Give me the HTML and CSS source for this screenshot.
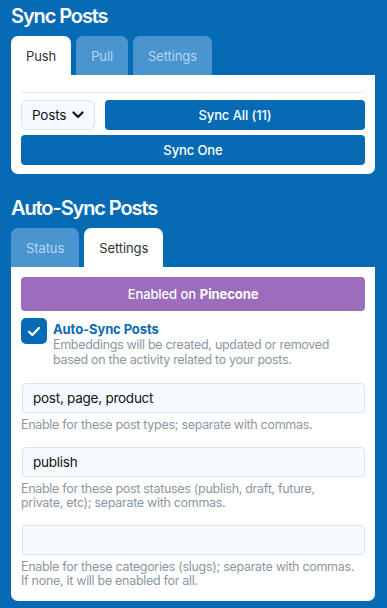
FILE: index.html
```
<!DOCTYPE html>
<html>
<head>
<meta charset="utf-8">
<link rel="stylesheet" href="styles.css">
</head>
<body>
<div class="page">
  <section class="block">
    <h2 class="title">Sync Posts</h2>
    <div class="tabs">
      <div class="tab active">Push</div>
      <div class="tab">Pull</div>
      <div class="tab">Settings</div>
    </div>
    <div class="panel panel-sync">
      <div class="rule"></div>
      <div class="row">
        <div class="select">Posts
          <svg class="chev" width="12" height="8" viewBox="0 0 12 8"><path d="M1.5 1.5 L6 6 L10.5 1.5" fill="none" stroke="#111" stroke-width="2.2" stroke-linecap="round" stroke-linejoin="round"/></svg>
        </div>
        <button class="btn grow">Sync All (11)</button>
      </div>
      <button class="btn full">Sync One</button>
    </div>
  </section>

  <section class="block">
    <h2 class="title">Auto-Sync Posts</h2>
    <div class="tabs">
      <div class="tab">Status</div>
      <div class="tab active">Settings</div>
    </div>
    <div class="panel panel-auto">
      <div class="banner">Enabled on <b>Pinecone</b></div>
      <div class="check-row">
        <div class="checkbox">
          <svg width="14" height="11" viewBox="0 0 14 11"><path d="M2 5.8 L5.3 9 L12 2" fill="none" stroke="#fff" stroke-width="2.2" stroke-linecap="round" stroke-linejoin="round"/></svg>
        </div>
        <div class="check-text">
          <div class="check-label">Auto-Sync Posts</div>
          <div class="check-desc">Embeddings will be created, updated or removed based on the activity related to your posts.</div>
        </div>
      </div>
      <div class="field first">
        <div class="input">post, page, product</div>
        <div class="help">Enable for these post types; separate with commas.</div>
      </div>
      <div class="field">
        <div class="input">publish</div>
        <div class="help">Enable for these post statuses (publish, draft, future, private, etc); separate with commas.</div>
      </div>
      <div class="field">
        <div class="input"></div>
        <div class="help">Enable for these categories (slugs); separate with commas. If none, it will be enabled for all.</div>
      </div>
    </div>
  </section>
</div>
</body>
</html>
```
FILE: styles.css
```
* { box-sizing: border-box; }
html, body { margin: 0; padding: 0; }
body {
  background: #066ab5;
  font-family: Inter, "Noto Sans", "Liberation Sans", sans-serif;
  color: #222;
}
.page { padding: 0 12px 0 11px; }
.title {
  margin: 0;
  color: #fff;
  font-size: 20px;
  font-weight: 600;
  letter-spacing: -1.1px;
  line-height: 24px;
}
.block:first-child .title { padding-top: 4px; margin-bottom: 8px; }
.block + .block .title { padding-top: 22px; margin-bottom: 8px; }
.tabs { display: flex; gap: 5px; }
.tab {
  height: 39px;
  padding: 0 15px;
  display: flex;
  align-items: center;
  border-radius: 7px 7px 0 0;
  background: #4a94d0;
  color: #b6d5f0;
  font-size: 13px;
  font-weight: 400;
  letter-spacing: -0.1px;
}
.tab.active { background: #fff; color: #333; }
.panel {
  background: #fff;
  border-radius: 0 0 7px 7px;
  padding: 0 10px 9px;
}
.panel-sync { padding-top: 17px; }
.rule { height: 1px; background: #e1ecfa; margin-bottom: 7px; }
.row { display: flex; gap: 10px; margin-bottom: 5px; }
.select {
  width: 74px;
  height: 30px;
  border: 1px solid #d8e7f5;
  background: #f6fbff;
  border-radius: 6px;
  display: flex;
  align-items: center;
  padding-left: 10px;
  gap: 6px;
  font-size: 13.5px;
  letter-spacing: -0.2px;
  color: #111;
}
.btn {
  height: 30px;
  border: 0;
  border-radius: 4px;
  background: #066ab5;
  color: #fff;
  font-family: inherit;
  font-size: 13px;
  font-weight: 500;
  letter-spacing: -0.1px;
  padding: 0;
}
.grow { flex: 1; }
.full { width: 100%; display: block; }
.panel-auto { padding-top: 10px; padding-bottom: 13px; }
.banner {
  height: 34px;
  background: #9c6dbb;
  border-radius: 4px;
  color: #fff;
  font-size: 13px;
  font-weight: 500;
  letter-spacing: -0.1px;
  display: flex;
  align-items: center;
  justify-content: center;
}
.banner b { font-weight: 700; margin-left: 4px; }
.check-row { display: flex; gap: 6px; margin-top: 7px; }
.checkbox {
  width: 26px;
  height: 26px;
  flex: none;
  background: #066ab5;
  border-radius: 5px;
  display: flex;
  align-items: center;
  justify-content: center;
}
.check-label {
  color: #0a6ab5;
  font-weight: 700;
  font-size: 13px;
  line-height: 16px;
  letter-spacing: -0.1px;
  margin-top: 3px;
}
.check-desc {
  color: #8b97a4;
  font-size: 12.5px;
  line-height: 15px;
  letter-spacing: -0.3px;
}
.field { margin-top: 15px; }
.field.first { margin-top: 16px; }
.input {
  height: 30px;
  margin-left: 1px;
  border: 1px solid #d3e5f5;
  background: #f7fbff;
  border-radius: 4px;
  padding-left: 10px;
  display: flex;
  align-items: center;
  font-size: 13.5px;
  letter-spacing: -0.25px;
  color: #111;
}
.help {
  color: #8b97a4;
  font-size: 12.5px;
  line-height: 14px;
  letter-spacing: -0.3px;
  margin-top: 5px;
  padding-right: 8px;
}
```
